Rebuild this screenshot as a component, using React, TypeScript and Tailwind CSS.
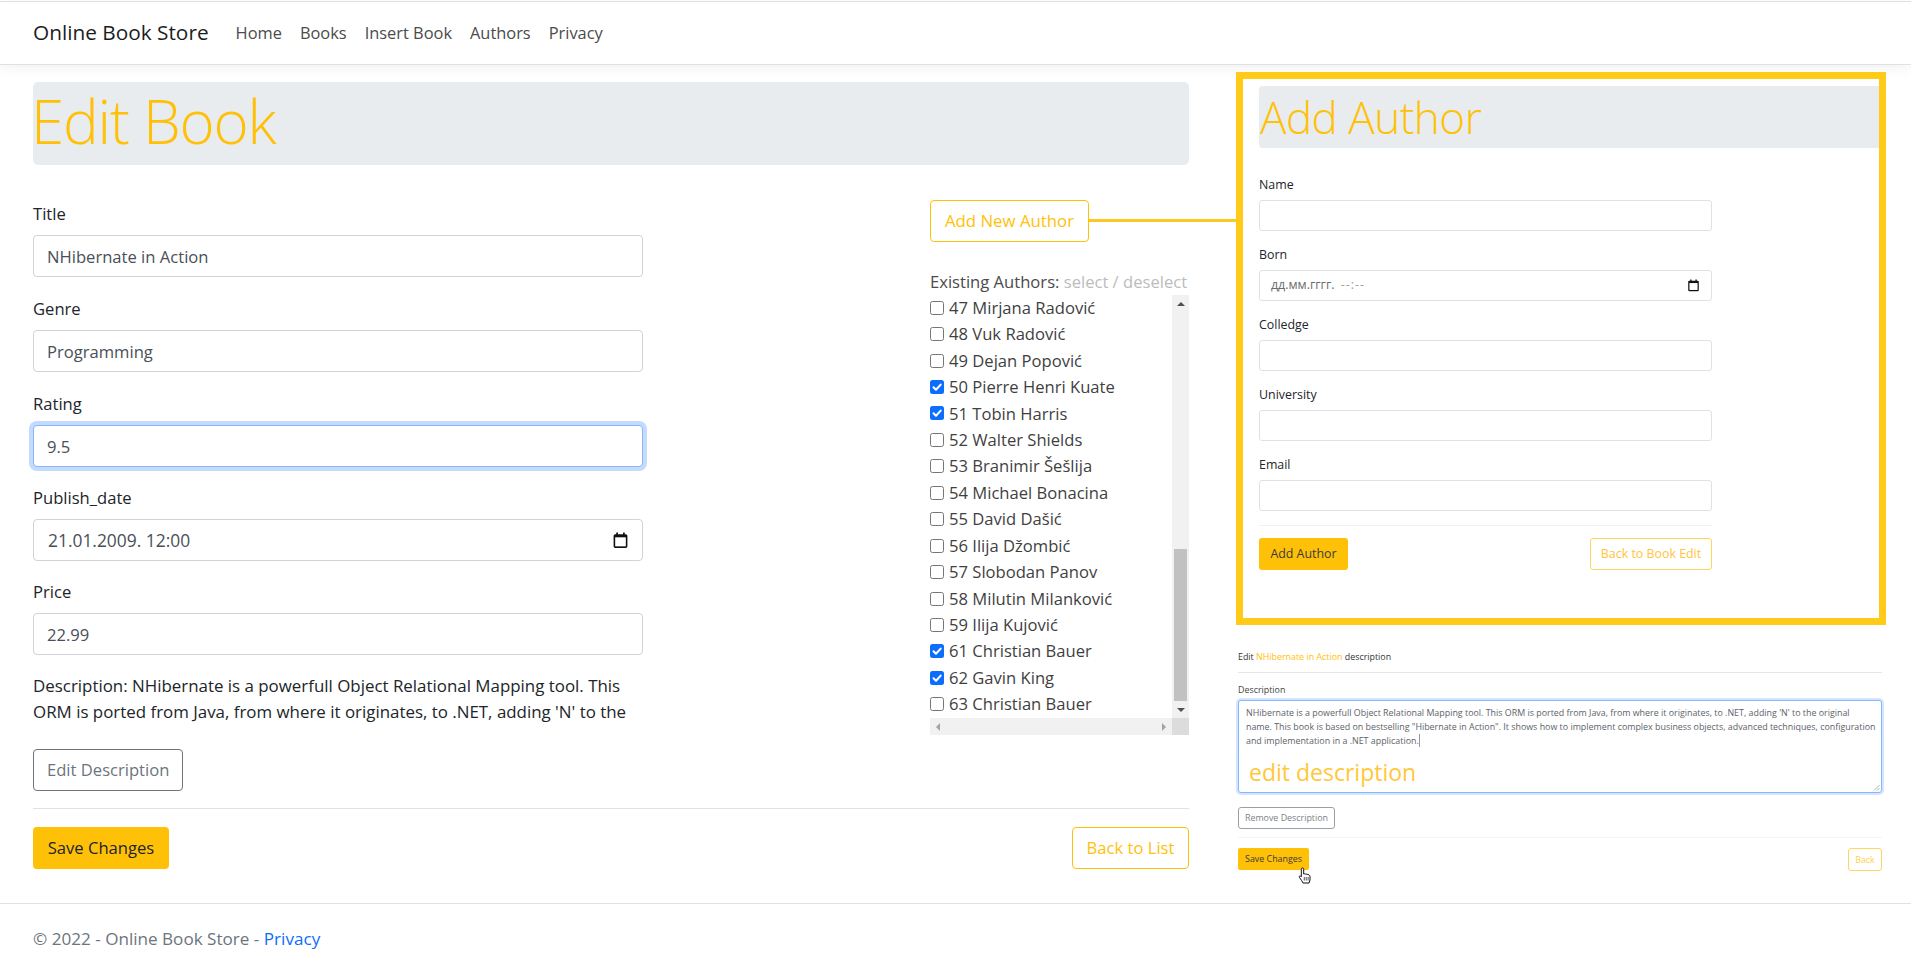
import React from "react";

const authors: [string, boolean][] = [
  ["47 Mirjana Radović", false],
  ["48 Vuk Radović", false],
  ["49 Dejan Popović", false],
  ["50 Pierre Henri Kuate", true],
  ["51 Tobin Harris", true],
  ["52 Walter Shields", false],
  ["53 Branimir Šešlija", false],
  ["54 Michael Bonacina", false],
  ["55 David Dašić", false],
  ["56 Ilija Džombić", false],
  ["57 Slobodan Panov", false],
  ["58 Milutin Milanković", false],
  ["59 Ilija Kujović", false],
  ["61 Christian Bauer", true],
  ["62 Gavin King", true],
  ["63 Christian Bauer", false],
];

function CalendarIcon({ size }: { size: number }) {
  return (
    <svg width={size} height={size} viewBox="0 0 16 16" className="shrink-0">
      <path d="M4 0.5h1.6V2h4.8V0.5H12V2h1a1.5 1.5 0 0 1 1.5 1.5v10A1.5 1.5 0 0 1 13 15H3a1.5 1.5 0 0 1-1.5-1.5v-10A1.5 1.5 0 0 1 3 2h1V0.5Z" fill="#111" />
      <rect x="3" y="5" width="10" height="8.5" fill="#fff" />
    </svg>
  );
}

function Check({ checked }: { checked: boolean }) {
  return checked ? (
    <span className="mb-[1px] flex h-[14px] w-[14px] shrink-0 items-center justify-center rounded-[2.5px] bg-[#0d6efd]">
      <svg width="12" height="12" viewBox="0 0 12 12">
        <path d="M2.500 6.200 5 8.700 9.700 3.600" fill="none" stroke="#fff" strokeWidth="2" strokeLinecap="round" strokeLinejoin="round" />
      </svg>
    </span>
  ) : (
    <span className="mb-[1px] h-[14px] w-[14px] shrink-0 rounded-[2.5px] border border-[#767676] bg-white" />
  );
}

function Triangle({ dir }: { dir: "up" | "down" | "left" | "right" }) {
  const pts = { up: "1,7 5,3 9,7", down: "1,3 5,7 9,3", left: "7,1 3,5 7,9", right: "3,1 7,5 3,9" }[dir];
  return (
    <svg width="10" height="10" viewBox="0 0 10 10">
      <polygon points={pts} fill={dir === "up" || dir === "down" ? "#505050" : "#a3a3a3"} />
    </svg>
  );
}

function BigField({ label, value, focus, tight }: { label: string; value: string; focus?: boolean; tight?: boolean }) {
  return (
    <div className={tight ? "mb-[18px]" : "mb-[19px]"}>
      <label className="mb-[8px] block h-[26px] leading-[26px] text-[#212529]">{label}</label>
      <input
        readOnly
        value={value}
        className={
          focus
            ? "block h-[42px] w-full rounded-[4px] border border-[#86b7fe] bg-white px-[13px] text-[#495057] shadow-[0_0_0_4px_rgba(13,110,253,0.25)] outline-none"
            : "block h-[42px] w-full rounded-[4px] border border-[#ced4da] bg-white px-[13px] text-[#495057] outline-none"
        }
      />
    </div>
  );
}

function SmallField({ label, children }: { label: string; children?: React.ReactNode }) {
  return (
    <div className="mt-[14px]">
      <label className="mb-[7px] block h-[18px] text-[12.4px] leading-[20px] text-[#212529]">{label}</label>
      <div className="flex h-[31px] items-center justify-between rounded-[3px] border border-[#dee2e6] bg-white px-[11px] text-[12.4px] text-[#495057]">
        {children}
      </div>
    </div>
  );
}

export default function App() {
  return (
    <div className="min-h-[968px] bg-white font-['Open_Sans','Noto_Sans',sans-serif] text-[16.6px] text-[#212529]">
      <nav className="mt-[1px] flex h-[64px] items-center border-t border-b border-[#dee2e6] pl-[33px] shadow-[0_4px_12px_rgba(0,0,0,0.05)]">
        <span className="mr-[27px] text-[20.8px] text-[#1d1d1d]">Online Book Store</span>
        <div className="flex gap-[18px] pt-[1px] text-[16.4px] text-[#4b4b4b]">
          <span>Home</span>
          <span>Books</span>
          <span>Insert Book</span>
          <span>Authors</span>
          <span>Privacy</span>
        </div>
      </nav>

      <main className="flex h-[839px] border-b border-[#dee2e6]">
        <section className="ml-[33px] w-[1156px]">
          <div className="mt-[17px] flex h-[83px] items-center rounded-[5px] bg-[#e9ecef] pb-[6px]">
            <h1 className="-ml-[2px] text-[60px] font-light leading-none tracking-[-1.2px] text-[#ffc107]">Edit Book</h1>
          </div>

          <div className="flex justify-between">
            <form className="mt-[36px] w-[610px]">
              <BigField label="Title" value="NHibernate in Action" />
              <BigField label="Genre" value="Programming" />
              <BigField label="Rating" value="9.5" focus tight />
              <div className="mb-[18px]">
                <label className="mb-[8px] block h-[26px] leading-[26px] text-[#212529]">Publish_date</label>
                <div className="flex h-[42px] items-center justify-between rounded-[4px] border border-[#ced4da] bg-white pl-[14px] pr-[13px] text-[17.4px] text-[#495057]">
                  <span>21.01.2009. 12:00</span>
                  <CalendarIcon size={17} />
                </div>
              </div>
              <BigField label="Price" value="22.99" />
              <p className="mt-[-1px] text-[16.9px] leading-[26px]">
                Description: NHibernate is a powerfull Object Relational Mapping tool. This ORM is ported from Java, from where it originates, to .NET, adding 'N' to the
              </p>
              <button type="button" className="mt-[24px] flex h-[42px] items-center rounded-[4px] border border-[#6c757d] bg-white px-[13px] text-[#6c757d]">
                Edit Description
              </button>
            </form>

            <aside className="relative mt-[35px] w-[259px]">
              <button type="button" className="flex h-[42px] w-[159px] items-center justify-center rounded-[4px] border border-[#ffc107] bg-white text-[16.8px] text-[#ffc107]">
                Add New Author
              </button>
              <div className="absolute left-[159px] top-[19px] h-[3px] w-[149px] bg-[#ffc81e]" />
              <div className="mt-[27px] h-[26px] whitespace-nowrap leading-[26px] text-[#4b4b4b]">
                Existing Authors: <span className="text-[#bcbcbc]">select / deselect</span>
              </div>
              <div className="flex h-[440px] w-[259px] flex-col">
                <div className="flex h-[423px]">
                  <ul className="w-[242px] overflow-hidden">
                    {authors.map(([name, checked]) => (
                      <li key={name} className="flex h-[26.45px] items-center gap-[5px] whitespace-nowrap text-[#3f3f3f]">
                        <Check checked={checked} />
                        <span>{name}</span>
                      </li>
                    ))}
                  </ul>
                  <div className="flex w-[17px] flex-col items-center bg-[#f1f1f1]">
                    <div className="flex h-[17px] items-center justify-center"><Triangle dir="up" /></div>
                    <div className="mt-[237px] h-[152px] w-[13px] bg-[#c1c1c1]" />
                    <div className="flex h-[17px] items-center justify-center"><Triangle dir="down" /></div>
                  </div>
                </div>
                <div className="flex h-[17px]">
                  <div className="flex w-[242px] items-center justify-between bg-[#f1f1f1] px-[3px]">
                    <Triangle dir="left" />
                    <Triangle dir="right" />
                  </div>
                  <div className="w-[17px] bg-[#dcdcdc]" />
                </div>
              </div>
            </aside>
          </div>

          <div className="mt-[17px] flex items-start justify-between border-t border-[#dee2e6] pt-[18px]">
            <button type="button" className="flex h-[42px] w-[136px] items-center justify-center rounded-[4px] bg-[#ffc107] text-[#212529]">
              Save Changes
            </button>
            <button type="button" className="flex h-[42px] w-[117px] items-center justify-center rounded-[4px] border border-[#ffc107] bg-white text-[#ffc107]">
              Back to List
            </button>
          </div>
        </section>

        <section className="ml-[47px] w-[650px]">
          <div className="mt-[7px] h-[553px] border-[7px] border-[#ffca18] bg-white pl-[16px]">
            <div className="mt-[7px] flex h-[62px] items-center rounded-l-[4px] bg-[#e9ecef] pl-[1px]">
              <h2 className="text-[44px] font-light leading-none tracking-[-0.5px] text-[#ffc107]">Add Author</h2>
            </div>
            <div className="mt-[27px] w-[453px]">
              <SmallField label="Name" />
              <SmallField label="Born">
                <span className="text-[#6b6b6b]">дд.мм.гггг. <span className="ml-[3px] tracking-[1px] text-[#a0a0a0]">--:--</span></span>
                <CalendarIcon size={13} />
              </SmallField>
              <SmallField label="Colledge" />
              <SmallField label="University" />
              <SmallField label="Email" />
              <div className="mt-[14px] flex items-start justify-between border-t border-[#f1f1f1] pt-[12px]">
                <button type="button" className="flex h-[32px] w-[89px] items-center justify-center rounded-[3px] bg-[#ffc107] pt-[1px] text-[12.4px] text-[#3a3a3a]">
                  Add Author
                </button>
                <button type="button" className="flex h-[32px] w-[122px] items-center justify-center rounded-[3px] border border-[#ffd65c] bg-white pt-[1px] text-[12.4px] text-[#ffc43a]">
                  Back to Book Edit
                </button>
              </div>
            </div>
          </div>

          <div className="ml-[2px] w-[644px] text-[8.9px]">
            <div className="mt-[25px] h-[14px] leading-[14px] text-[#333]">
              Edit <span className="text-[#ffc107]">NHibernate in Action</span> description
            </div>
            <div className="mt-[8px] border-t border-[#e5e5e5] pt-[10px]">
              <div className="h-[14px] leading-[14px] text-[#444]">Description</div>
              <div className="relative mt-[3px] h-[93px] rounded-[3px] border border-[#86b7fe] bg-white py-[5px] pl-[7px] pr-[3px] leading-[14px] text-[#5c6369] shadow-[0_0_0_2px_rgba(13,110,253,0.18)]">
                <p className="whitespace-nowrap">
                  NHibernate is a powerfull Object Relational Mapping tool. This ORM is ported from Java, from where it originates, to .NET, adding 'N' to the original
                  <br />
                  name. This book is based on bestselling "Hibernate in Action". It shows how to implement complex business objects, advanced techniques, configuration
                  <br />
                  and implementation in a .NET application. <span className="border-l border-[#999]" />
                </p>
                <span className="absolute left-[10px] top-[57px] text-[23px] leading-[28px] text-[#ffc83a]">edit description</span>
                <svg width="7" height="7" viewBox="0 0 7 7" className="absolute bottom-[1px] right-[1px]">
                  <path d="M6.500 1 1 6.500M6.500 4 4 6.500" stroke="#999" strokeWidth="0.8" />
                </svg>
              </div>
              <button type="button" className="mt-[14px] flex h-[22px] w-[97px] items-center justify-center rounded-[3px] border border-[#9aa0a6] bg-white text-[#7b8288]">
                Remove Description
              </button>
              <div className="relative mt-[8px] flex items-start justify-between border-t border-[#f4f4f4] pt-[10px]">
                <button type="button" className="flex h-[22px] w-[71px] items-center justify-center rounded-[2px] bg-[#ffc107] text-[#3a3a3a]">
                  Save Changes
                </button>
                <button type="button" className="flex h-[23px] w-[34px] items-center justify-center rounded-[3px] border border-[#ffd65c] bg-white text-[#ffd04c]">
                  Back
                </button>
                <svg width="14" height="19" viewBox="0 0 14 19" className="absolute left-[60px] top-[29px]">
                  <path d="M4.500 1c.7 0 1.200.500 1.200 1.200V7l.800-.200.900.300.800-.100 1 .500.900-.100 1.200.800c.500.400.700.800.700 1.400v3.400l-1 3H5L3.600 13.500 1.500 10.500c-.500-.800-.300-1.500.300-1.600.500-.100 1 .200 1.500.900V2.200C3.300 1.500 3.800 1 4.500 1Z" fill="#fff" stroke="#111" strokeWidth="1" />
                  <path d="M6.300 10v3.500M8.200 10v3.500M10.100 10v3.500" stroke="#111" strokeWidth="0.7" />
                </svg>
              </div>
            </div>
          </div>
        </section>
      </main>

      <footer className="pl-[33px] pt-[22px] text-[17.1px] leading-[26px] text-[#6c757d]">
        © 2022 - Online Book Store - <span className="text-[#0d6efd]">Privacy</span>
      </footer>
    </div>
  );
}
